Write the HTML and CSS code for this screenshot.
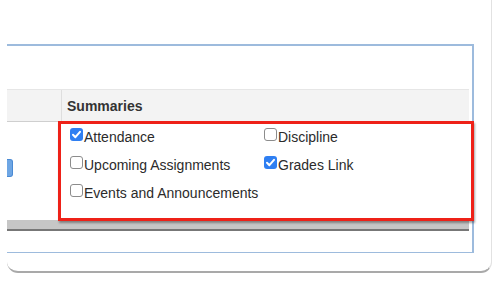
FILE: index.html
```html
<!DOCTYPE html>
<html>
<head>
<meta charset="utf-8">
<link rel="stylesheet" href="styles.css">
</head>
<body>
<div class="card">
  <div class="panel">
    <div class="table">
      <div class="thead">
        <div class="th th-first"></div>
        <div class="th th-main">Summaries</div>
      </div>
      <div class="trow">
        <div class="td td-first"><span class="btn-frag"></span></div>
        <div class="td td-main">
          <div class="opts">
            <label class="opt"><span class="cb on"><svg viewBox="0 0 13 13" width="13" height="13"><path d="M3 6.8 L5.4 9.2 L10 3.8" fill="none" stroke="#fff" stroke-width="2" stroke-linecap="round" stroke-linejoin="round"/></svg></span>Attendance</label>
            <label class="opt"><span class="cb"></span>Discipline</label>
            <label class="opt"><span class="cb"></span>Upcoming Assignments</label>
            <label class="opt"><span class="cb on"><svg viewBox="0 0 13 13" width="13" height="13"><path d="M3 6.8 L5.4 9.2 L10 3.8" fill="none" stroke="#fff" stroke-width="2" stroke-linecap="round" stroke-linejoin="round"/></svg></span>Grades Link</label>
            <label class="opt"><span class="cb"></span>Events and Announcements</label>
          </div>
        </div>
        <div class="highlight"></div>
      </div>
      <div class="tfoot"></div>
    </div>
  </div>
</div>
</body>
</html>
```
FILE: styles.css
```css
html, body {
  margin: 0;
  padding: 0;
  background: #fff;
}
body {
  width: 500px;
  height: 286px;
  overflow: hidden;
  font-family: "Liberation Sans", Arial, sans-serif;
  font-size: 14px;
  color: #2b2b2b;
}
.card {
  margin: -12px 8px 0 7px;
  padding: 56px 17px 18px 0;
  border-right: 1px solid #e2e2e2;
  border-bottom: 2px solid #a9a9a9;
  border-radius: 0 0 11px 11px;
}
.panel {
  border-top: 2px solid #9dbbdd;
  border-right: 2px solid #9dbbdd;
  border-bottom: 1px solid #9dbbdd;
  padding: 43px 3px 21px 0;
}
.table {
  display: flex;
  flex-direction: column;
}
.thead {
  display: flex;
  height: 31px;
  background: #f3f3f3;
  border-top: 1px solid #e6e6e6;
  border-bottom: 1px solid #cfcfcf;
}
.th-first {
  width: 54px;
  border-right: 1px solid #dedede;
}
.th-main {
  flex: 1;
  display: flex;
  align-items: center;
  padding-left: 5px;
  font-weight: bold;
  color: #333;
}
.trow {
  position: relative;
  display: flex;
  height: 98px;
}
.td-first {
  width: 55px;
  display: flex;
  align-items: flex-start;
}
.btn-frag {
  display: block;
  margin-top: 37px;
  width: 5px;
  height: 16px;
  background: #6ea6e4;
  border: 1px solid #4a8ad4;
  border-left: none;
  border-radius: 0 3px 3px 0;
}
.td-main {
  flex: 1;
  padding: 7px 0 0 8px;
}
.opts {
  display: grid;
  grid-template-columns: 194px 194px;
  row-gap: 12px;
}
.opt {
  display: flex;
  align-items: flex-start;
  line-height: 16px;
  white-space: nowrap;
}
.cb {
  box-sizing: border-box;
  width: 13px;
  height: 13px;
  margin-top: -1px;
  margin-right: 1px;
  border: 1px solid #8c8c8c;
  border-radius: 3px;
  background: #fff;
  flex: none;
}
.cb.on {
  border: none;
  background: #2f7ff2;
}
.cb svg {
  display: block;
}
.highlight {
  position: absolute;
  left: 51px;
  right: -5px;
  top: -1px;
  bottom: -1px;
  border: 3px solid #ee2118;
  box-shadow: 1px 2px 2px rgba(0, 0, 0, 0.35);
  pointer-events: none;
}
.tfoot {
  height: 9px;
  background: #c6c6c6;
  border-bottom: 2px solid #777;
}
```
